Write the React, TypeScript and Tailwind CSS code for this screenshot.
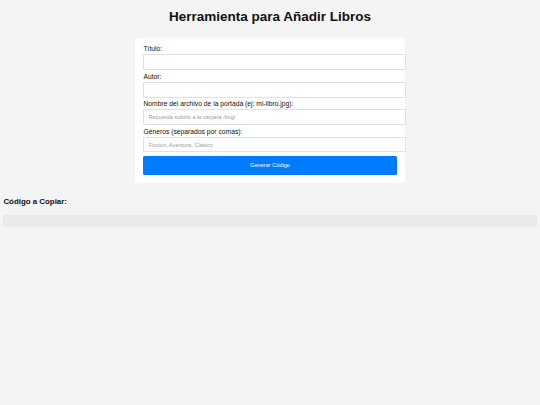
import { useState } from "react"

const fields = [
  { id: "titulo", label: "Título:", placeholder: "" },
  { id: "autor", label: "Autor:", placeholder: "" },
  { id: "portada", label: "Nombre del archivo de la portada (ej: mi-libro.jpg):", placeholder: "Recuerda subirlo a la carpeta /img/" },
  { id: "generos", label: "Géneros (separados por comas):", placeholder: "Ficción, Aventura, Clásico" },
]

export default function App() {
  const [values, setValues] = useState<Record<string, string>>({})
  const [code, setCode] = useState("")

  const generate = () => {
    const genres = (values.generos || "")
      .split(",")
      .map((g) => g.trim())
      .filter(Boolean)
    setCode(
      JSON.stringify(
        { titulo: values.titulo || "", autor: values.autor || "", portada: "img/" + (values.portada || ""), generos: genres },
        null,
        2
      )
    )
  }

  return (
    <div className="min-h-screen bg-[#f4f4f4] px-[3.4px] pt-[9px] pb-4 font-['Liberation_Sans',Arial,sans-serif] text-[#111]">
      <h1 className="text-center text-[13.5px] leading-[15.5px] font-bold">Herramienta para Añadir Libros</h1>

      <div className="mx-auto mt-[13.5px] w-[270px] rounded-[3.4px] bg-white px-[8.4px] pt-[7.2px] pb-[8px]">
        {fields.map((f, i) => (
          <div key={f.id} className={i > 0 ? "mt-[2.6px]" : ""}>
            <label htmlFor={f.id} className="block text-[6.75px] leading-[7.8px]">
              {f.label}
            </label>
            <input
              id={f.id}
              type="text"
              value={values[f.id] || ""}
              placeholder={f.placeholder}
              onChange={(e) => setValues({ ...values, [f.id]: e.target.value })}
              className="mt-[1.4px] block h-[15.7px] w-[calc(100%+9.2px)] border border-[#e2e2e2] bg-white px-[4.2px] text-[5.6px] outline-none placeholder:text-[#9a9a9a]"
            />
          </div>
        ))}
        <button
          onClick={generate}
          className="mt-[3.2px] block h-[19px] w-full rounded-[1.5px] bg-[#007bff] text-[5.6px] text-white"
        >
          Generar Código
        </button>
      </div>

      <h3 className="mt-[14.3px] text-[7.9px] leading-[9.1px] font-bold">Código a Copiar:</h3>
      <pre className="mt-[8.6px] min-h-[12.5px] rounded-[2px] bg-[#e9e9e9] px-[6px] py-[3px] text-[5.6px] whitespace-pre-wrap">{code}</pre>
    </div>
  )
}
